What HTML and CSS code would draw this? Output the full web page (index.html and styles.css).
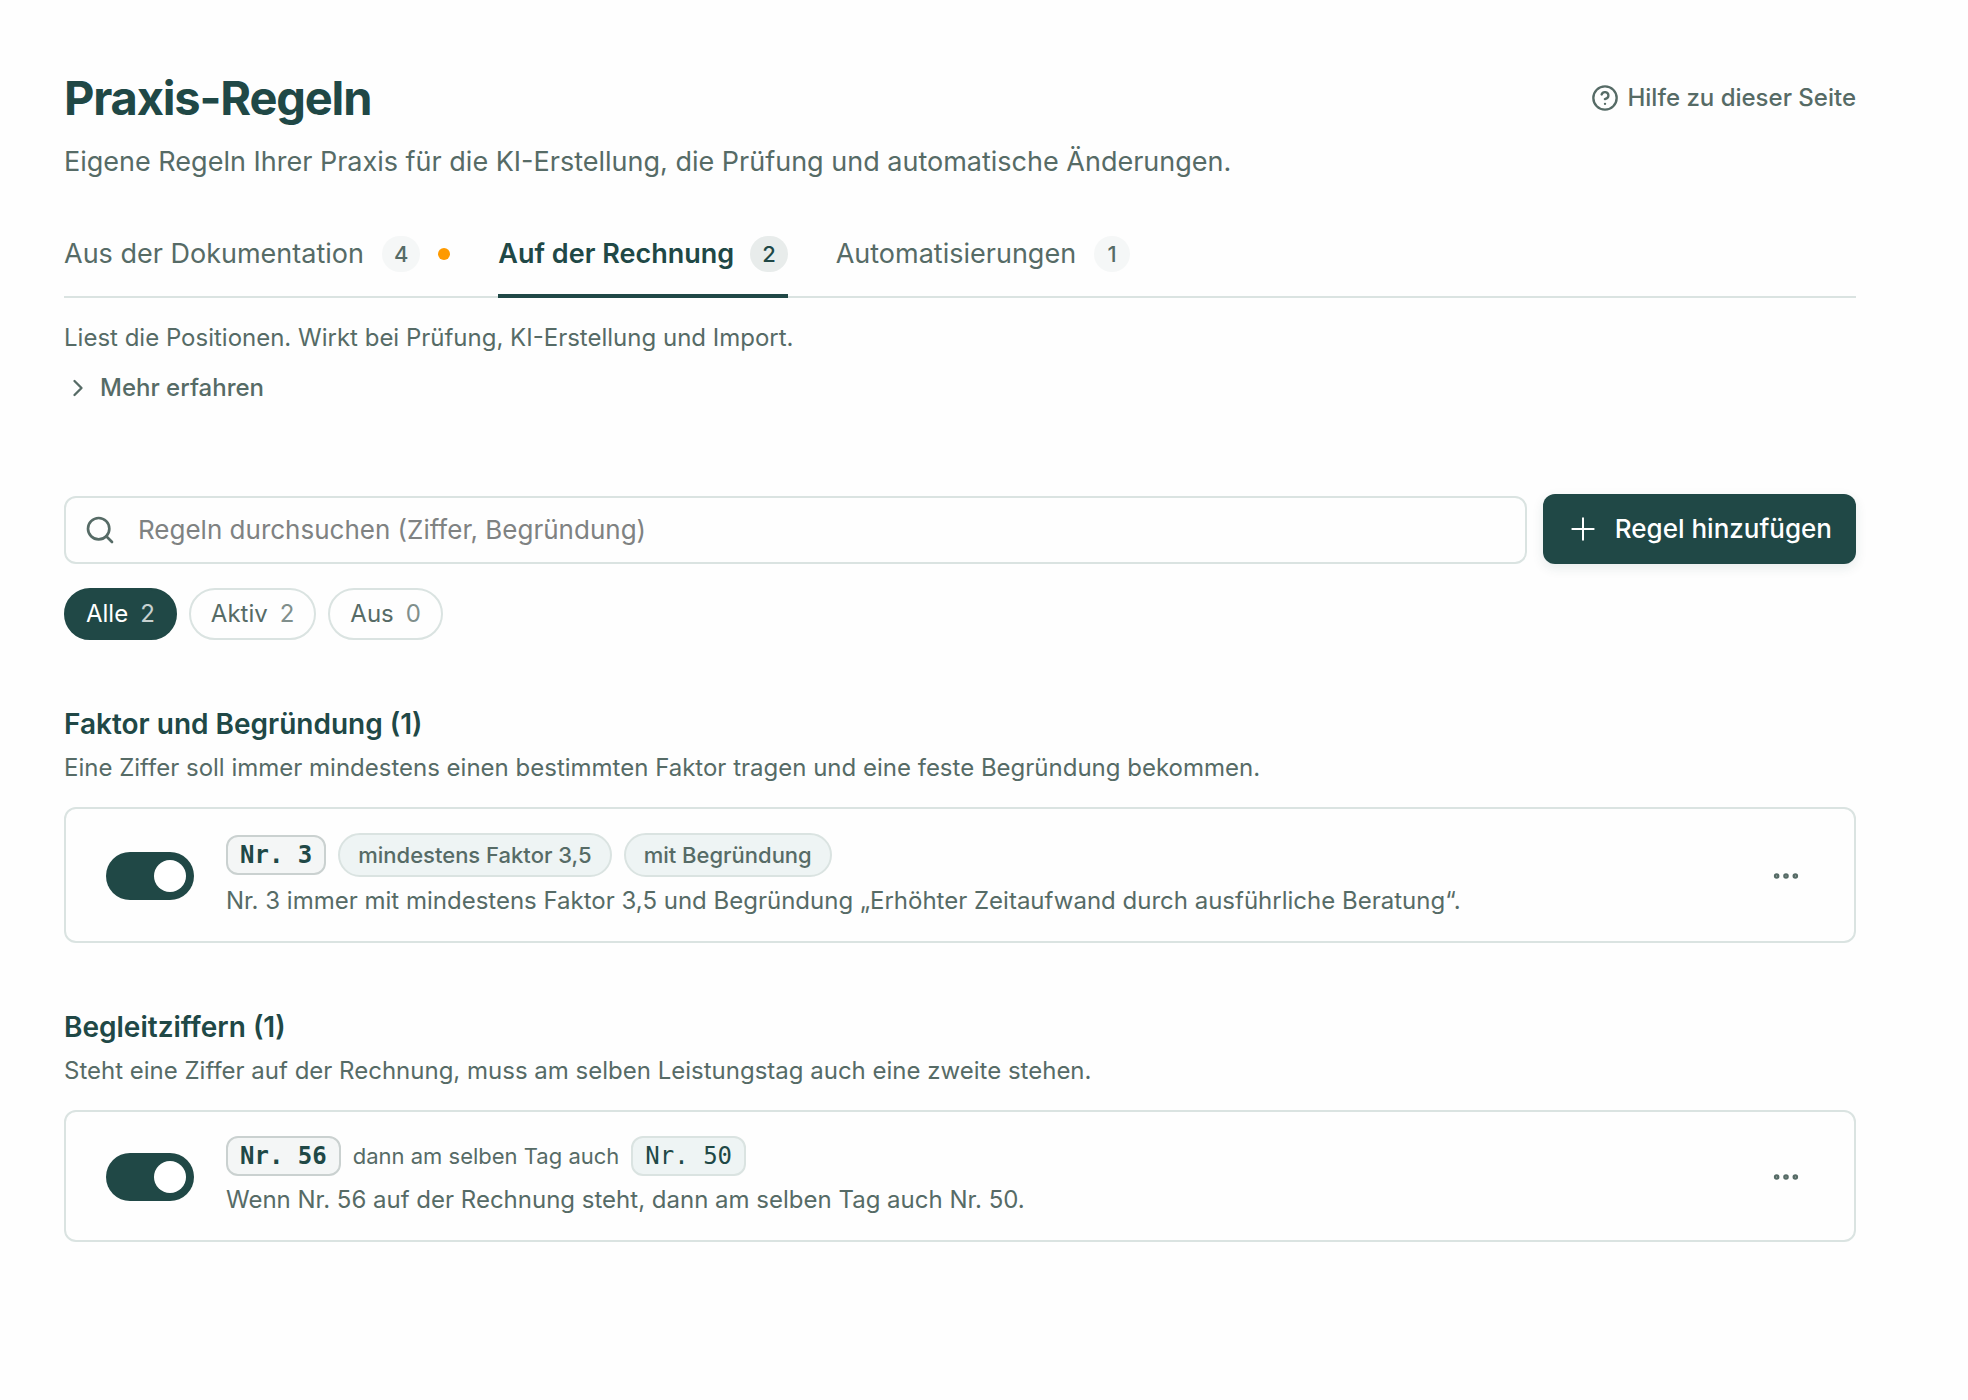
FILE: index.html
```html
<!DOCTYPE html>
<html lang="de">
<head>
    <meta charset="UTF-8">
    <meta name="viewport" content="width=device-width, initial-scale=1.0">
    <title>Praxis-Regeln</title>
    <link rel="stylesheet" href="styles.css">
</head>
<body>

<main class="page">
    <header class="page-header">
        <h1>Praxis-Regeln</h1>
        <a class="help-link" href="#hilfe">
            <svg class="icon" viewBox="0 0 24 24"><circle cx="12" cy="12" r="10"/><path d="M9.09 9a3 3 0 0 1 5.83 1c0 2-3 3-3 3"/><path d="M12 17h.01"/></svg>
            Hilfe zu dieser Seite
        </a>
    </header>
    <p class="subtitle">Eigene Regeln Ihrer Praxis für die KI-Erstellung, die Prüfung und automatische Änderungen.</p>

    <nav class="tabs">
        <button class="tab">Aus der Dokumentation <span class="count">4</span><span class="dot"></span></button>
        <button class="tab active">Auf der Rechnung <span class="count">2</span></button>
        <button class="tab">Automatisierungen <span class="count">1</span></button>
    </nav>

    <p class="text intro">Liest die Positionen. Wirkt bei Prüfung, KI-Erstellung und Import.</p>
    <button class="more">
        <svg class="icon" viewBox="0 0 24 24"><path d="m9 18 6-6-6-6"/></svg>
        Mehr erfahren
    </button>

    <div class="toolbar">
        <div class="search">
            <svg class="icon icon-lg" viewBox="0 0 24 24"><circle cx="11" cy="11" r="8"/><path d="m21 21-4.3-4.3"/></svg>
            <input type="text" aria-label="Regeln durchsuchen" placeholder="Regeln durchsuchen (Ziffer, Begründung)">
        </div>
        <button class="add-button">
            <svg class="icon icon-lg" viewBox="0 0 24 24"><path d="M4 12h16M12 4v16"/></svg>
            Regel hinzufügen
        </button>
    </div>

    <div class="filters">
        <button class="filter active">Alle <span>2</span></button>
        <button class="filter">Aktiv <span>2</span></button>
        <button class="filter">Aus <span>0</span></button>
    </div>

    <section class="group">
        <h2>Faktor und Begründung (1)</h2>
        <p class="text">Eine Ziffer soll immer mindestens einen bestimmten Faktor tragen und eine feste Begründung bekommen.</p>
        <article class="rule">
            <input class="toggle" type="checkbox" role="switch" aria-label="Regel Nr. 3 aktiv" checked>
            <div class="rule-body">
                <div class="tags">
                    <span class="code main">Nr. 3</span>
                    <span class="tag">mindestens Faktor 3,5</span>
                    <span class="tag">mit Begründung</span>
                </div>
                <p class="text">Nr. 3 immer mit mindestens Faktor 3,5 und Begründung „Erhöhter Zeitaufwand durch ausführliche Beratung“.</p>
            </div>
            <button class="menu-button" aria-label="Aktionen">
                <svg class="icon" viewBox="0 0 24 24"><circle cx="4" cy="12" r="1.4"/><circle cx="12" cy="12" r="1.4"/><circle cx="20" cy="12" r="1.4"/></svg>
            </button>
        </article>
    </section>

    <section class="group">
        <h2>Begleitziffern (1)</h2>
        <p class="text">Steht eine Ziffer auf der Rechnung, muss am selben Leistungstag auch eine zweite stehen.</p>
        <article class="rule">
            <input class="toggle" type="checkbox" role="switch" aria-label="Regel Nr. 56 aktiv" checked>
            <div class="rule-body">
                <div class="tags">
                    <span class="code main">Nr. 56</span>
                    <span class="joiner">dann am selben Tag auch</span>
                    <span class="code">Nr. 50</span>
                </div>
                <p class="text">Wenn Nr. 56 auf der Rechnung steht, dann am selben Tag auch Nr. 50.</p>
            </div>
            <button class="menu-button" aria-label="Aktionen">
                <svg class="icon" viewBox="0 0 24 24"><circle cx="4" cy="12" r="1.4"/><circle cx="12" cy="12" r="1.4"/><circle cx="20" cy="12" r="1.4"/></svg>
            </button>
        </article>
    </section>
</main>

</body>
</html>
```
FILE: styles.css
```css
* {
    box-sizing: border-box;
}

body {
    margin: 0;
    font-family: Inter, sans-serif;
    font-size: 24px;
    line-height: 36px;
    background-color: #fefefe;
    color: #566b66;
}

h1, h2, p {
    margin: 0;
}

button {
    font: inherit;
    color: inherit;
    background: none;
    border: none;
    padding: 0;
    cursor: pointer;
}

.icon {
    width: 28px;
    height: 28px;
    flex-shrink: 0;
    fill: none;
    stroke: currentColor;
    stroke-width: 2;
    stroke-linecap: round;
    stroke-linejoin: round;
}

.icon-lg {
    width: 32px;
    height: 32px;
}

.page {
    padding: 64px 112px 64px 64px;
}

.page-header {
    display: flex;
    justify-content: space-between;
    align-items: center;
}

h1 {
    font-size: 47px;
    line-height: 68px;
    font-weight: 700;
    letter-spacing: -0.025em;
    color: #204846;
}

.help-link {
    display: flex;
    align-items: center;
    gap: 8px;
    font-weight: 500;
    color: inherit;
    text-decoration: none;
}

.subtitle {
    margin-top: 10px;
    font-size: 27px;
    line-height: 40px;
}

/* Tabs */
.tabs {
    display: flex;
    gap: 48px;
    margin-top: 32px;
    box-shadow: inset 0 -2px 0 #dae3e1;
}

.tab {
    display: flex;
    align-items: center;
    gap: 18px;
    padding: 20px 0;
    font-size: 27px;
    line-height: 40px;
    border-bottom: 4px solid transparent;
}

.tab.active {
    gap: 16px;
    font-weight: 600;
    color: #204846;
    border-bottom-color: #204846;
}

.count {
    min-width: 36px;
    padding: 0 12px;
    border-radius: 18px;
    background: #f5f7f7;
    font-size: 22px;
    line-height: 36px;
    font-weight: 500;
}

.tab.active .count {
    background: #e8eceb;
}

.dot {
    width: 12px;
    height: 12px;
    border-radius: 50%;
    background: #fe9a00;
}

.intro {
    margin-top: 22px;
}

.more {
    display: flex;
    align-items: center;
    gap: 8px;
    margin-top: 14px;
    font-weight: 500;
}

/* Search and add */
.toolbar {
    display: flex;
    align-items: flex-end;
    gap: 16px;
    margin-top: 88px;
}

.search {
    flex: 1;
    display: flex;
    align-items: center;
    gap: 22px;
    height: 68px;
    padding: 0 18px;
    border: 2px solid #dae3e1;
    border-radius: 12px;
}

.search input {
    flex: 1;
    min-width: 0;
    padding: 0;
    border: none;
    outline: none;
    background: none;
    font: inherit;
    font-size: 26px;
    color: #204846;
}

.search input::placeholder {
    color: #7f8282;
}

.add-button {
    display: flex;
    align-items: center;
    gap: 16px;
    height: 70px;
    padding: 0 24px;
    border-radius: 12px;
    background: #204846;
    color: #ffffff;
    font-size: 26px;
    font-weight: 500;
    box-shadow: 0 4px 12px rgba(31, 70, 68, 0.1);
}

.add-button .icon {
    stroke-width: 1.5;
}

.filters {
    display: flex;
    gap: 12px;
    margin-top: 24px;
}

.filter {
    display: flex;
    gap: 12px;
    padding: 6px 20px;
    border: 2px solid #dae3e1;
    border-radius: 26px;
}

.filter span {
    opacity: 0.75;
}

.filter.active {
    background: #204846;
    border-color: #204846;
    color: #ffffff;
}

/* Rule groups */
.group {
    margin-top: 64px;
}

.group h2 {
    margin-bottom: 6px;
    font-size: 28px;
    line-height: 40px;
    font-weight: 600;
    color: #204846;
}

.rule {
    display: flex;
    align-items: center;
    gap: 32px;
    margin-top: 21px;
    padding: 24px 40px 22px;
    border: 2px solid #dae3e1;
    border-radius: 12px;
}

.toggle {
    appearance: none;
    width: 88px;
    height: 48px;
    margin: 0;
    padding: 8px;
    border-radius: 24px;
    background: #c9d3d1;
    display: flex;
    flex-shrink: 0;
    cursor: pointer;
}

.toggle::before {
    content: "";
    width: 32px;
    height: 32px;
    border-radius: 50%;
    background: #ffffff;
}

.toggle:checked {
    justify-content: flex-end;
    background: #204846;
}

.rule-body {
    flex: 1;
}

.tags {
    display: flex;
    align-items: center;
    gap: 12px;
    margin-bottom: 6px;
}

.code {
    padding: 0 12px;
    border: 2px solid #dae3e1;
    border-radius: 12px;
    background: #eef4f4;
    font-family: "DejaVu Sans Mono", monospace;
    color: #204846;
}

.code.main {
    border-color: #cad1d0;
    background: #f4f6f6;
    font-weight: 700;
}

.tag {
    padding: 2px 18px;
    border: 2px solid #dae3e1;
    border-radius: 22px;
    background: #eef4f4;
    font-size: 22px;
    font-weight: 500;
}

.joiner {
    font-size: 22px;
}

.menu-button {
    display: flex;
    padding: 14px;
}
```
